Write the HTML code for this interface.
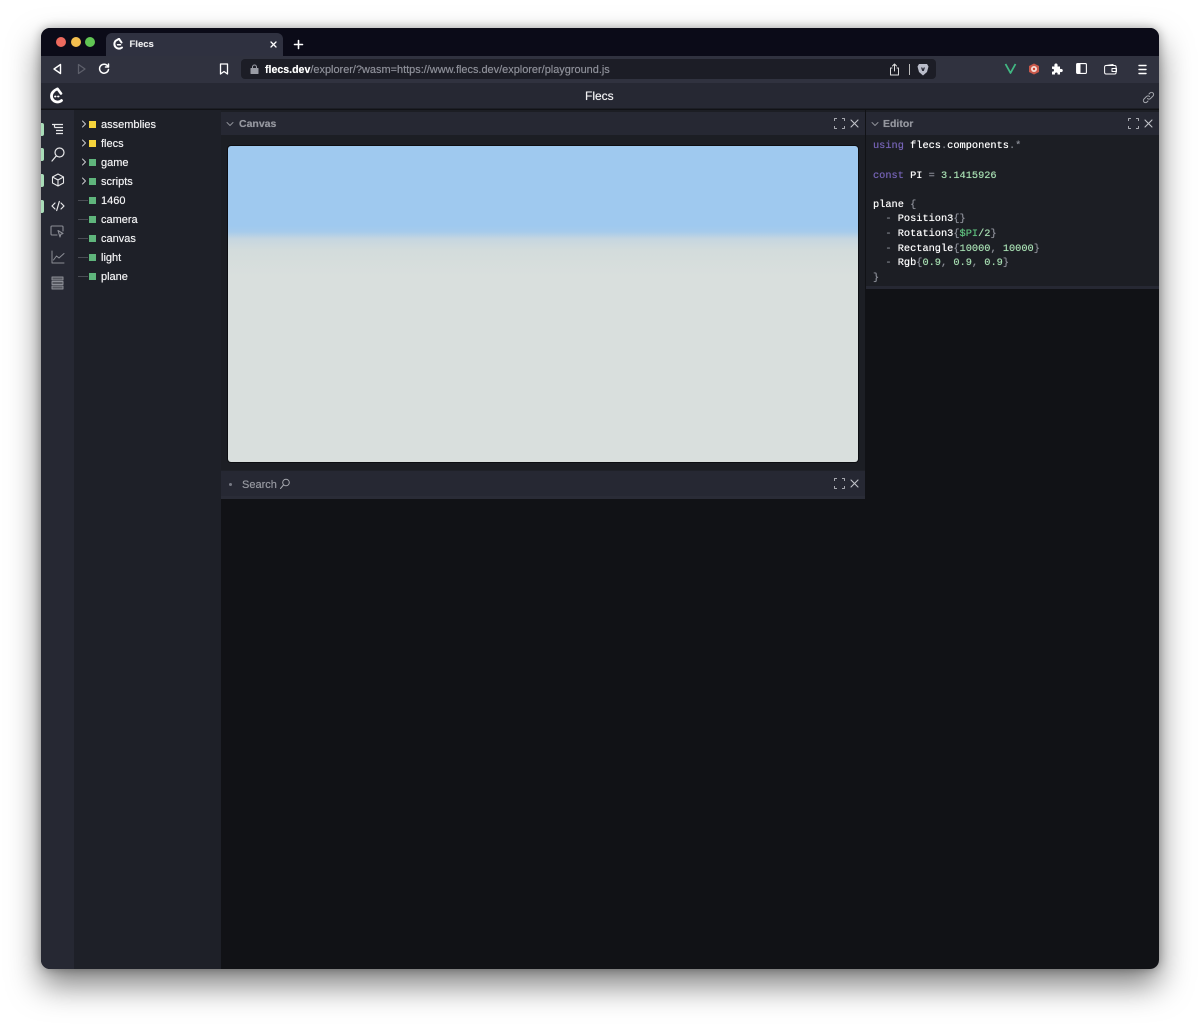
<!DOCTYPE html>
<html><head><meta charset="utf-8"><title>Flecs</title>
<style>
html,body{margin:0;padding:0;width:1200px;height:1024px;overflow:hidden;background:#fff;font-family:"Liberation Sans",sans-serif}
div,span,svg{position:absolute;box-sizing:border-box}
span.c,span.c span{position:static}
#win{left:41px;top:28px;width:1118px;height:941px;border-radius:9px;overflow:hidden;background:#111216;fill:none;stroke:#fff;stroke-linecap:round;stroke-linejoin:round;text-shadow:0 0 .5px currentColor}
#sh{left:41px;top:28px;width:1118px;height:941px;border-radius:9px;box-shadow:0 16px 32px rgba(0,0,0,.5),0 0 10px rgba(0,0,0,.3)}
.t{white-space:nowrap;color:#fff}
.row{left:60px;font-size:11px;color:#f0f0f2;line-height:14px;white-space:nowrap}
.sq{left:48px;width:7px;height:7px;background:#5fb57c}
.y{background:#f5d33c}
.mark{left:0;width:3px;height:13px;background:#a9dcb8;border-radius:0 2px 2px 0}
.code{left:832px;font:10.3px/14.6px "Liberation Mono",monospace;color:#fff;white-space:pre}
.p{color:#7563b5}.n{color:#a5dcb0}.g{color:#8a8d96}
.ph{background:#262833;height:23px}
.pt{font-size:10.5px;font-weight:bold;color:#94969e;white-space:nowrap;line-height:14px}
</style></head><body>
<div id="sh"></div>
<div id="win">
<div style="left:0;top:0;width:1118px;height:28px;background:#0b0b18"></div>
<div style="left:65px;top:5px;width:177px;height:23px;background:#2f3140;border-radius:6px 6px 0 0"></div>
<div style="left:15px;top:9px;width:10px;height:10px;border-radius:50%;background:#ed6a5e"></div>
<div style="left:29.500px;top:9px;width:10px;height:10px;border-radius:50%;background:#f4bf4f"></div>
<div style="left:44px;top:9px;width:10px;height:10px;border-radius:50%;background:#61c554"></div>
<svg style="left:71px;top:10px" width="12" height="13" viewBox="0 0 12 13" stroke-width="2"><path d="M4 2.500A4.200 4.200 0 1 0 10 9.500"/><path d="M5 2 7 .8 9.500 4.500"/><path d="M5.500 6.800h3" stroke-width="1.500"/></svg>
<div class="t" style="left:88.500px;top:10px;font-size:9.500px;font-weight:bold;line-height:14px;color:#e8e8ea">Flecs</div>
<svg style="left:229px;top:13px" width="7" height="7" viewBox="0 0 7 7" stroke-width="1.300"><path d="M1 1l5 5M6 1 1 6"/></svg>
<svg style="left:252px;top:11px" width="11" height="11" viewBox="0 0 11 11" stroke-width="1.600"><path d="M5.500 1.500v8M1.500 5.500h8"/></svg>

<div style="left:0;top:28px;width:1118px;height:27px;background:#30323f"></div>
<svg style="left:11px;top:35px" width="11" height="12" viewBox="0 0 11 12" stroke-width="1.400"><path d="M8.500 1.500v9L2 6z"/></svg>
<svg style="left:35px;top:35px" width="11" height="12" viewBox="0 0 11 12" stroke="#5d5f6a" stroke-width="1.300"><path d="M2.500 1.500v9L9 6z"/></svg>
<svg style="left:57px;top:35px" width="12" height="12" viewBox="0 0 12 12" stroke-width="1.500"><path d="M10 3.500A4.500 4.500 0 1 0 10.500 6.500M10.500 1v3h-3"/></svg>
<svg style="left:178px;top:35px" width="10" height="12" viewBox="0 0 10 12" stroke-width="1.300"><path d="M1.500 1h7v10L5 8.500 1.500 11z"/></svg>
<div style="left:200px;top:31px;width:695px;height:20px;background:#1c1d26;border-radius:4px"></div>
<svg style="left:209px;top:36px" width="9" height="10" viewBox="0 0 9 10" stroke="#9a9ca5" stroke-width="1"><rect x="1" y="4.500" width="7" height="5" fill="#9a9ca5"/><path d="M2.500 4.500V3a2 2 0 0 1 4 0v1.500"/></svg>
<div class="t" style="left:224px;top:35px;font-size:10.950px;line-height:14px;color:#8c8e97"><span class="c" style="color:#fff;font-weight:bold;font-size:10.600px">flecs.dev</span>/explorer/?wasm=https://www.flecs.dev/explorer/playground.js</div>
<svg style="left:848px;top:35px" width="11" height="13" viewBox="0 0 11 13" stroke="#ddd" stroke-width="1"><path d="M3 5H1.500v7h8V5H8M5.500 8V1M3.500 3l2-2 2 2"/></svg>
<div style="left:868px;top:36px;width:1px;height:11px;background:#bbb"></div>
<svg style="left:876px;top:35px" width="12" height="13" viewBox="0 0 12 13" stroke="none"><path d="M2 1h8l1.500 2.500L10 9l-4 3.500L2 9 .5 3.500z" fill="#b9bcc9"/><path d="M4 4.500h1.300L6 6l.7-1.500H8L6.800 8H5.200z" fill="#2a2c38"/></svg>

<svg style="left:963px;top:34px" width="13" height="13" viewBox="0 0 13 13" stroke="#41b883" stroke-width="1.800" stroke-linecap="butt"><path d="M1.500 2 6.500 11 11.500 2"/></svg>
<svg style="left:987px;top:35px" width="12" height="12" viewBox="0 0 12 12" stroke="none"><path d="M6 .5 11 3v6l-5 2.500L1 9V3z" fill="#c8584a"/><circle cx="6" cy="6" r="3" fill="#f4dcd6"/><circle cx="6" cy="6" r="1.200" fill="#c8402f"/></svg>
<svg style="left:1010px;top:35px" width="12" height="12" viewBox="0 0 12 12" stroke="none"><path d="M1 3.500h2.500C3 1 4 .5 5 .5S7 1 6.500 3.500H9V6c2-.5 2.800.5 2.800 1.500S11 9.500 9 9v2.500H6.500c.4-1.500-.3-2-1.200-2s-1.600.5-1.300 2H1V8.500C2.500 9 3 8 3 7.200S2.500 5.500 1 6z" fill="#fff"/></svg>
<svg style="left:1035px;top:35px" width="11" height="11" viewBox="0 0 11 11" stroke-width="1.100"><rect x=".6" y=".6" width="9.800" height="9.800" rx="1"/><rect x="1" y="1" width="3.500" height="9" fill="#fff" stroke="none"/></svg>
<svg style="left:1063px;top:36px" width="13" height="11" viewBox="0 0 13 11" stroke-width="1"><rect x=".6" y="1.500" width="11.500" height="8.500" rx="1.500"/><path d="M2 1.500 9 .5v1M8 4.500h4.500v3H8z"/></svg>
<svg style="left:1097px;top:36px" width="9" height="11" viewBox="0 0 9 11" stroke-width="1.400"><path d="M1 1.500h7M1 5.500h7M1 9.500h7"/></svg>

<div style="left:0;top:55px;width:1118px;height:26px;background:#262833;border-bottom:1px solid #1c1e25"></div>
<svg style="left:7px;top:59px" width="16" height="18" viewBox="0 0 16 18" stroke-width="2.800"><path d="M5.500 4.500A6 6 0 1 0 13.500 13.500"/><path d="M6.500 3.500 9.500 1.800 13 6.500" stroke-width="2.600"/><path d="M7 9.500h.6M10 9.500h.6" stroke-width="1.800"/></svg>
<div class="t" style="left:544px;top:61px;font-size:12px;line-height:14px;color:#f0f0f2">Flecs</div>
<svg style="left:1101px;top:63px" width="13" height="13" viewBox="0 0 13 13" stroke="#a5a7ae" stroke-width="1"><path d="M5.500 7.500a2 2 0 0 0 3 0l2.500-2.500a2 2 0 0 0-3-3L7 3M7.500 5.500a2 2 0 0 0-3 0L2 8a2 2 0 0 0 3 3l1-1"/></svg>

<div style="left:0;top:82px;width:33px;height:859px;background:#262833"></div>
<div style="left:33px;top:82px;width:147px;height:859px;background:#1e2028"></div>
<div class="mark" style="top:95px"></div><div class="mark" style="top:120px"></div><div class="mark" style="top:146px"></div><div class="mark" style="top:172px"></div>
<svg style="left:10px;top:95px" width="13" height="13" viewBox="0 0 13 13" stroke="#e8e8ea" stroke-width="1.200" stroke-linecap="butt"><path d="M1 1.500h11M3.500 4.500h8.500M5 7.500h7M5 10.500h7M3.500 1.500v3"/></svg>
<svg style="left:10px;top:119px" width="14" height="15" viewBox="0 0 14 15" stroke="#e8e8ea" stroke-width="1.200"><circle cx="8.500" cy="5.500" r="4.500"/><path d="M5.200 9 1 14"/></svg>
<svg style="left:10px;top:145px" width="14" height="14" viewBox="0 0 14 14" stroke="#e8e8ea" stroke-width="1.100"><path d="M7 1l5.500 3v6L7 13 1.500 10V4zM1.500 4 7 7l5.500-3M7 7v6"/></svg>
<svg style="left:10px;top:172px" width="14" height="12" viewBox="0 0 14 12" stroke="#e8e8ea" stroke-width="1.200"><path d="M4 3 1 6l3 3M10 3l3 3-3 3M8.300 1.500 5.700 10.500"/></svg>
<svg style="left:9px;top:196px" width="15" height="15" viewBox="0 0 15 15" stroke="#8c8e96" stroke-width="1.100"><path d="M7 11H2a1 1 0 0 1-1-1V3a1 1 0 0 1 1-1h10a1 1 0 0 1 1 1v4"/><path d="M8 6.500l5 3-2.200.8-.8 2.700z"/></svg>
<svg style="left:10px;top:222px" width="14" height="14" viewBox="0 0 14 14" stroke="#8c8e96" stroke-width="1"><path d="M1 1v12h12M2.500 10l3-4 2.500 2 5-4.500"/></svg>
<svg style="left:10px;top:248px" width="13" height="14" viewBox="0 0 13 14" stroke="#8c8e96" stroke-width="1"><rect x="1" y="1" width="11" height="3" fill="#55575f"/><rect x="1" y="5.500" width="11" height="3" fill="#55575f"/><rect x="1" y="10" width="11" height="3" fill="#55575f"/></svg>

<!-- tree -->
<svg style="left:39px;top:92px" width="8" height="8" viewBox="0 0 8 8" stroke="#c8c9cd" stroke-width="1"><path d="M2.500 1 5.500 4l-3 3"/></svg>
<svg style="left:39px;top:111px" width="8" height="8" viewBox="0 0 8 8" stroke="#c8c9cd" stroke-width="1"><path d="M2.500 1 5.500 4l-3 3"/></svg>
<svg style="left:39px;top:130px" width="8" height="8" viewBox="0 0 8 8" stroke="#c8c9cd" stroke-width="1"><path d="M2.500 1 5.500 4l-3 3"/></svg>
<svg style="left:39px;top:149px" width="8" height="8" viewBox="0 0 8 8" stroke="#c8c9cd" stroke-width="1"><path d="M2.500 1 5.500 4l-3 3"/></svg>
<div style="left:37px;top:172px;width:10px;height:1px;background:#4a4c54"></div>
<div style="left:37px;top:191px;width:10px;height:1px;background:#4a4c54"></div>
<div style="left:37px;top:210px;width:10px;height:1px;background:#4a4c54"></div>
<div style="left:37px;top:229px;width:10px;height:1px;background:#4a4c54"></div>
<div style="left:37px;top:248px;width:10px;height:1px;background:#4a4c54"></div>
<div class="sq y" style="top:93px"></div><div class="row" style="top:90px">assemblies</div>
<div class="sq y" style="top:112px"></div><div class="row" style="top:109px">flecs</div>
<div class="sq" style="top:131px"></div><div class="row" style="top:128px">game</div>
<div class="sq" style="top:150px"></div><div class="row" style="top:147px">scripts</div>
<div class="sq" style="top:169px"></div><div class="row" style="top:166px">1460</div>
<div class="sq" style="top:188px"></div><div class="row" style="top:185px">camera</div>
<div class="sq" style="top:207px"></div><div class="row" style="top:204px">canvas</div>
<div class="sq" style="top:226px"></div><div class="row" style="top:223px">light</div>
<div class="sq" style="top:245px"></div><div class="row" style="top:242px">plane</div>

<!-- canvas panel -->
<div style="left:180px;top:82px;width:644px;height:388px;background:#1c1e24"></div>
<div class="ph" style="left:180px;top:84px;width:644px"></div>
<svg style="left:185px;top:92px" width="8" height="8" viewBox="0 0 8 8" stroke="#8c8e96" stroke-width="1"><path d="M1 2.500 4 5.500 7 2.500"/></svg>
<div class="pt" style="left:198px;top:89px">Canvas</div>
<svg style="left:793px;top:90px" width="11" height="11" viewBox="0 0 11 11" stroke="#a5a7ae" stroke-width="1" stroke-linecap="butt"><path d="M.5 3V.5H3M8 .5h2.500V3M10.500 8v2.500H8M3 10.500H.5V8"/></svg>
<svg style="left:809px;top:91px" width="9" height="9" viewBox="0 0 9 9" stroke="#c0c2c8" stroke-width="1.100"><path d="M1 1l7 7M8 1 1 8"/></svg>
<div style="left:187px;top:118px;width:630px;height:316px;border-radius:3px;box-shadow:0 0 0 1px #0d0e12;background:linear-gradient(180deg,#9fc9ef 0,#9fc9ef 80px,#a7cbeb 86px,#c6d6e0 93px,#d3dcdc 104px,#d9dfdd 130px,#d9dfdd 100%)"></div>

<!-- search panel -->
<div style="left:180px;top:442px;width:644px;height:29px;background:#262833;border-top:1px solid #1f2128;border-bottom:3px solid #2a2c37"></div>
<div style="left:188px;top:455px;width:3px;height:3px;border-radius:50%;background:#777a84"></div>
<div class="t" style="left:201px;top:450px;font-size:11px;line-height:14px;color:#94969e">Search</div>
<svg style="left:238px;top:450px" width="11" height="12" viewBox="0 0 11 12" stroke="#a5a7ae" stroke-width="1"><circle cx="7" cy="4.500" r="3.300"/><path d="M4.500 7 1.500 10.500"/></svg>
<svg style="left:793px;top:450px" width="11" height="11" viewBox="0 0 11 11" stroke="#a5a7ae" stroke-width="1" stroke-linecap="butt"><path d="M.5 3V.5H3M8 .5h2.500V3M10.500 8v2.500H8M3 10.500H.5V8"/></svg>
<svg style="left:809px;top:451px" width="9" height="9" viewBox="0 0 9 9" stroke="#c0c2c8" stroke-width="1.100"><path d="M1 1l7 7M8 1 1 8"/></svg>

<!-- editor -->
<div style="left:825px;top:82px;width:293px;height:179px;background:#1c1e24;border-bottom:3px solid #262833"></div>
<div class="ph" style="left:825px;top:84px;width:293px"></div>
<svg style="left:830px;top:92px" width="8" height="8" viewBox="0 0 8 8" stroke="#8c8e96" stroke-width="1"><path d="M1 2.500 4 5.500 7 2.500"/></svg>
<div class="pt" style="left:842px;top:89px">Editor</div>
<svg style="left:1087px;top:90px" width="11" height="11" viewBox="0 0 11 11" stroke="#a5a7ae" stroke-width="1" stroke-linecap="butt"><path d="M.5 3V.5H3M8 .5h2.500V3M10.500 8v2.500H8M3 10.500H.5V8"/></svg>
<svg style="left:1103px;top:91px" width="9" height="9" viewBox="0 0 9 9" stroke="#c0c2c8" stroke-width="1.100"><path d="M1 1l7 7M8 1 1 8"/></svg>
<div class="code" style="top:111.400px"><span class="c"><span class="p">using</span> flecs<span class="g">.</span>components<span class="g">.*</span>

<span class="p">const</span> PI <span class="g">=</span> <span class="n">3.1415926</span>

plane <span class="g">{</span>
  <span class="g">-</span> Position3<span class="g">{}</span>
  <span class="g">-</span> Rotation3<span class="g">{</span><span style="color:#5fc07e">$PI</span><span class="n">/2</span><span class="g">}</span>
  <span class="g">-</span> Rectangle<span class="g">{</span><span class="n">10000</span><span class="g">,</span> <span class="n">10000</span><span class="g">}</span>
  <span class="g">-</span> Rgb<span class="g">{</span><span class="n">0.9</span><span class="g">,</span> <span class="n">0.9</span><span class="g">,</span> <span class="n">0.9</span><span class="g">}</span>
<span class="g">}</span></span></div>
</div>
</body></html>
